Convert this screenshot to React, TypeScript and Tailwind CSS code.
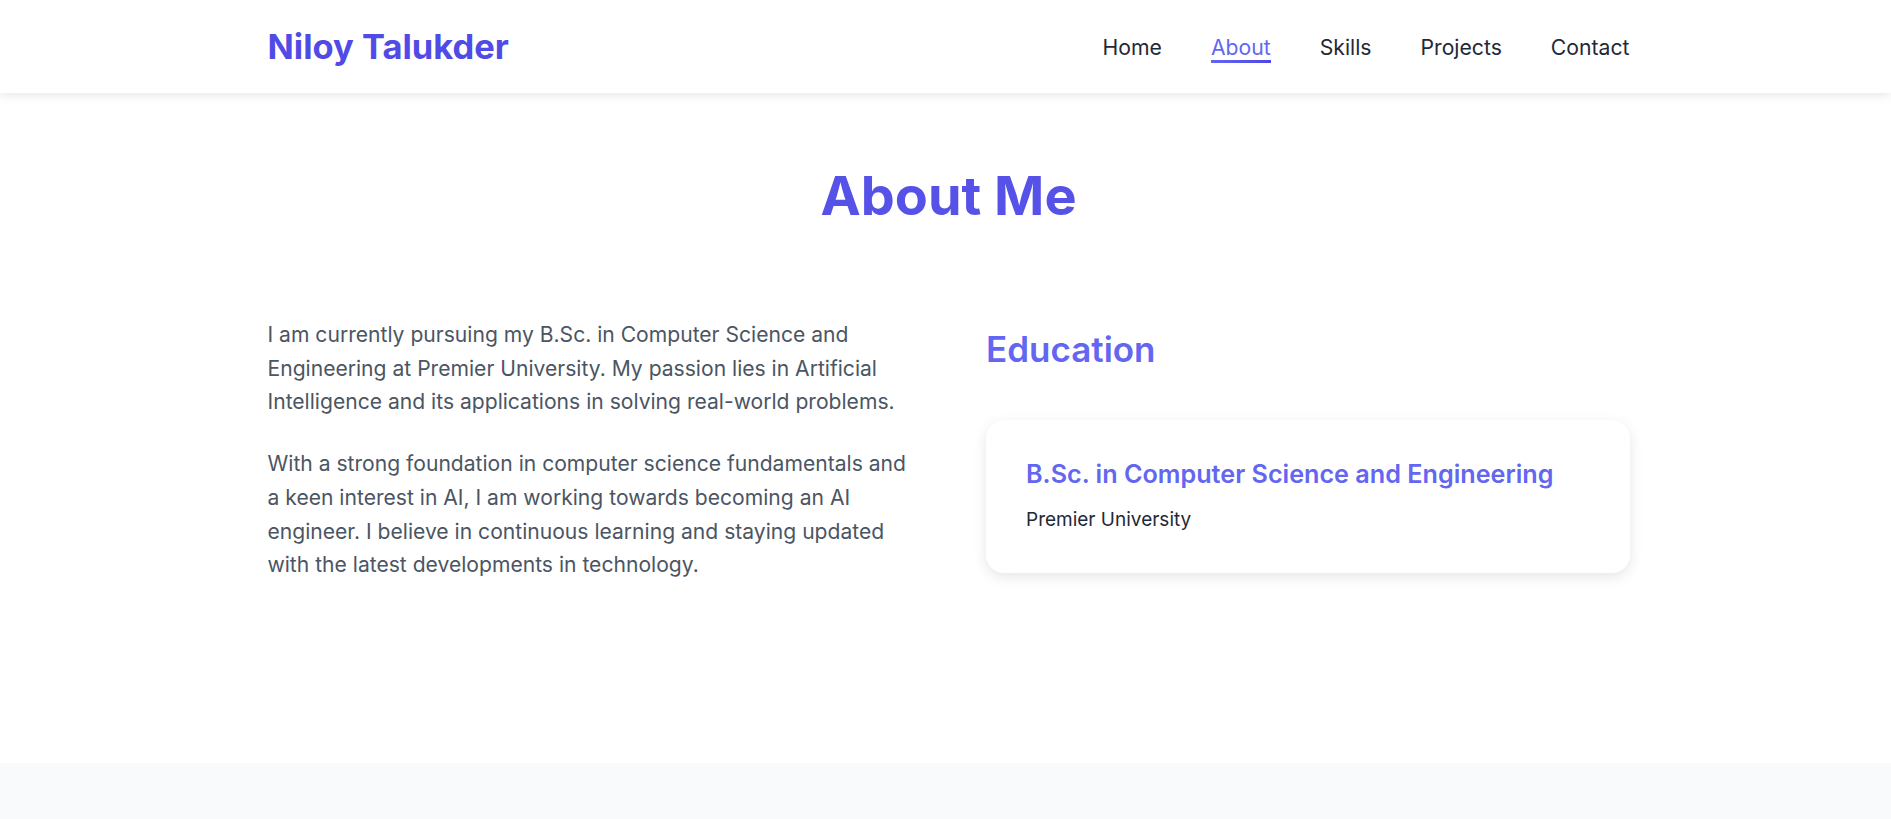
const navLinks = ["Home", "About", "Skills", "Projects", "Contact"];

function Header() {
  return (
    <header className="relative z-10 bg-white pl-[6px] shadow-[0_2px_10px_rgba(0,0,0,0.1)]">
      <div className="mx-auto flex h-[93px] max-w-[1402px] items-center justify-between px-5">
        <span className="text-[34.5px] font-bold text-[#504be6]">Niloy Talukder</span>
        <nav className="flex items-center gap-[49px]">
          {navLinks.map((link) => (
            <a
              key={link}
              href={`#${link.toLowerCase()}`}
              className={`relative text-[21.2px] leading-[32px] ${
                link === "About" ? "text-[#6366f1]" : "text-[#1f2937]"
              }`}
            >
              {link}
              {link === "About" && (
                <span className="absolute bottom-0 left-0 h-[3px] w-full bg-gradient-to-r from-[#6366f1] to-[#4f46e5]" />
              )}
            </a>
          ))}
        </nav>
      </div>
    </header>
  );
}

function About() {
  return (
    <section id="about" className="bg-white pt-[70px] pb-[181px] pl-[6px]">
      <div className="mx-auto max-w-[1402px] px-5">
        <h2 className="mb-[90px] text-center text-[54px] leading-[65px] font-bold text-[#5652e8]">
          About Me
        </h2>

        <div className="grid grid-cols-2 gap-[75px]">
          <div className="text-[21.1px] leading-[33.7px] text-[#4b5563]">
            <p className="mb-[28px]">
              I am currently pursuing my B.Sc. in Computer Science and Engineering at Premier
              University. My passion lies in Artificial Intelligence and its applications in
              solving real-world problems.
            </p>
            <p>
              With a strong foundation in computer science fundamentals and a keen interest in AI,
              I am working towards becoming an AI engineer. I believe in continuous learning and
              staying updated with the latest developments in technology.
            </p>
          </div>

          <div>
            <h3 className="mb-[39px] text-[35px] leading-[63px] font-semibold text-[#6366f1]">
              Education
            </h3>
            <div className="rounded-[18px] bg-white px-10 pt-[39px] pb-[39px] shadow-[0_4px_14px_rgba(0,0,0,0.1)]">
              <h4 className="mb-[17px] text-[25.2px] leading-[30px] font-semibold text-[#6366f1]">
                B.Sc. in Computer Science and Engineering
              </h4>
              <p className="text-[19px] leading-[28px] text-[#1f2937]">Premier University</p>
            </div>
          </div>
        </div>
      </div>
    </section>
  );
}

export default function App() {
  return (
    <div className="min-h-screen bg-[#f9fafb] font-['Inter',sans-serif]">
      <Header />
      <About />
    </div>
  );
}
